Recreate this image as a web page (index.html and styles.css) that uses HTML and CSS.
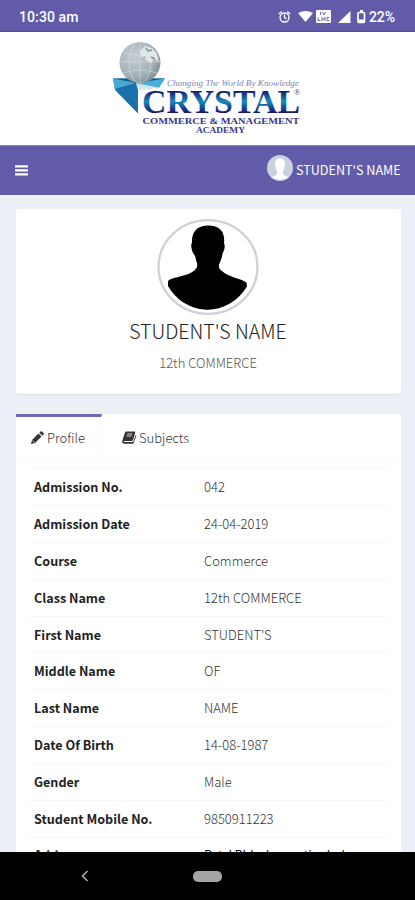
FILE: index.html
```html
<!DOCTYPE html>
<html lang="en">
<head>
<meta charset="utf-8">
<meta name="viewport" content="width=device-width">
<title>Student Profile</title>
<link rel="stylesheet" href="styles.css">
</head>
<body>
<div class="screen">
  <header class="status">
    <span class="clock">10:30 am</span>
    <svg class="status-icons" width="90" height="18" viewBox="0 0 90 18" fill="#fff">
      <g fill="none" stroke="#fff" stroke-width="1.3"><circle cx="7.5" cy="9.5" r="4.5"/><path d="M7.5 6.5v3l2 1.500M1.800 6l3-2.600M13.200 6l-3-2.600"/></g>
      <path d="M21 5q7.500-4 15 0l-7.500 9z"/>
      <rect x="39" y="2" width="15" height="13" rx="1"/>
      <path d="M43.500 4v3M45.500 4l1.500 3 1.500-3M41 9.500v3h2.500M45 9v4M48 9v4M45 11h3M52.500 9.500H50v3h2.500" fill="none" stroke="#615baa" stroke-width=".9"/>
      <path d="M61 15 73.500 3v12z"/>
      <rect x="81" y="4.500" width="6.500" height="10" rx="1" fill="none" stroke="#fff" stroke-width="1.700"/><path d="M83 2h3v2h-3zM82 11.500h5v3h-5z"/>
    </svg>
    <span class="battery">22%</span>
  </header>

  <div class="brand">
    <svg width="205" height="110" viewBox="0 0 205 110">
      <defs>
        <linearGradient id="word" x1="0" y1="0" x2="0" y2="1"><stop offset=".2" stop-color="#171b72"/><stop offset=".48" stop-color="#168abc"/><stop offset=".8" stop-color="#17156c"/></linearGradient>
        <radialGradient id="globe" cx=".38" cy=".35" r=".7"><stop stop-color="#c5ced2"/><stop offset=".7" stop-color="#a4b0b6"/><stop offset="1" stop-color="#7b8b93"/></radialGradient>
      </defs>
      <path d="M8 44.500h52l-6 9-21 2v24L10 56z" fill="#2482b7"/>
      <path d="M8 44.500h52L33 50z" fill="#155d91"/>
      <path d="M8 44.500 31 49 10 55z" fill="#4ba8d2"/>
      <path d="M10 55l21-6 2 4v26z" fill="#1b70ad"/>
      <path d="M33 49l27-4.500-6 9z" fill="#46b0db"/>
      <path d="M31 49l23 4.500-21 3z" fill="#d3e7f0"/>
      <circle cx="35" cy="28.500" r="20.500" fill="url(#globe)"/>
      <g fill="none" stroke="#dce4e7" stroke-width=".8" opacity=".7"><path d="M35 8v41M15 28h41M18 18q17 6 34 0M18 39q17-6 34 0"/><ellipse cx="35" cy="28.500" rx="11" ry="20.500"/></g>
      <path d="M35 17l5-5 7 2 5 6 2 8-5-3-3 4-5-3-1-4-4 1z" fill="#e0e7e8"/>
      <path d="M41 14l2 3 4-1M46 23l4 2" fill="none" stroke="#829298" stroke-width="1.500"/>
      <text class="motto" x="62" y="52" textLength="132" lengthAdjust="spacingAndGlyphs">Changing The World By Knowledge</text>
      <text class="wordmark" x="37" y="79" textLength="158" lengthAdjust="spacingAndGlyphs" fill="url(#word)">CRYSTAL</text>
      <text class="registered" x="189" y="61">®</text>
      <text class="subbrand" x="37.500" y="89.500" textLength="157" lengthAdjust="spacingAndGlyphs">COMMERCE &amp; MANAGEMENT</text>
      <text class="subbrand" x="91" y="99" textLength="49" lengthAdjust="spacingAndGlyphs">ACADEMY</text>
    </svg>
  </div>

  <nav class="navbar">
    <svg width="13" height="12" viewBox="0 0 13 12" fill="#fff"><rect width="13" height="2.400" y=".2" rx=".4"/><rect width="13" height="2.400" y="4.200" rx=".4"/><rect width="13" height="2.400" y="8.200" rx=".4"/></svg>
    <div class="user">
      <svg width="26" height="26" viewBox="0 0 26 26"><circle cx="13" cy="13" r="13" fill="#c9d1df"/><path d="M13 3.500c3.500 0 5.300 2.300 5 6.500-.2 3-1 4.500-2 6v3c1 1.500 3.500 1.500 5 3A13 13 0 0 1 5 22c1.500-1.500 4-1.500 5-3v-3c-1-1.500-1.800-3-2-6-.3-4.200 1.500-6.500 5-6.500z" fill="#fff"/></svg>
      <span>STUDENT'S NAME</span>
    </div>
  </nav>

  <main class="content">
    <section class="card person">
      <svg width="102" height="98" viewBox="0 0 102 98">
        <ellipse cx="51" cy="49" rx="49.500" ry="46.800" fill="#fff" stroke="#ced1d9" stroke-width="2.300"/>
        <path d="M50 7.500C39 8 34.500 15 35 25c-1.500 1-.5 7 1 10 1.500 2 2.500 3 3 7 1 3 1.500 4 1 7-3 6-10 7.500-17 9.500-5 1.500-9 1.500-12 4.500v5C19 82 32 90 47 91.500c16 1.500 33-6.500 43-23l-.5-4c-8-5-17-5-24-11-3-2.500-4-3-3.500-7 2-4 3-7 3.500-11 2-3 3-8 1.500-10 1-9-2-15-9-17-2-1-5-1-8-1z"/>
      </svg>
      <h1>STUDENT'S NAME</h1>
      <p>12th COMMERCE</p>
    </section>

    <section class="card details">
      <div class="tabs">
        <div class="tab active"><svg width="13" height="13" viewBox="0 0 13 13" fill="#333"><path d="M0 13l1-4 6.500-6.500 3 3L4 12zM8.300 1.700 9.500.5q.7-.7 1.500 0L12.500 2q.7.700 0 1.500l-1.200 1.200z"/><path d="M1.500 9.500l2 2" stroke="#fff" stroke-width=".7"/></svg><span>Profile</span></div>
        <div class="tab"><svg width="14" height="13" viewBox="0 0 14 13"><path d="M4 .5h8.500q1 .2.700 1.200L11 9q-.4 1-1.400 1H2.300q-.8.200-.6 1h8.500q1 0 1.400-1L13.500 4q.7.600.4 1.500l-2 6q-.4 1.300-1.700 1.300H2Q-.2 12.200.2 10L2.800 2Q3.200.7 4 .5z" fill="#333"/><path d="M5.200 3h5M4.600 5h5" stroke="#fff" stroke-width=".8"/></svg><span>Subjects</span></div>
      </div>
      <dl class="rows">
        <div class="row"><dt>Admission No.</dt><dd>042</dd></div>
        <div class="row"><dt>Admission Date</dt><dd>24-04-2019</dd></div>
        <div class="row"><dt>Course</dt><dd>Commerce</dd></div>
        <div class="row"><dt>Class Name</dt><dd>12th COMMERCE</dd></div>
        <div class="row"><dt>First Name</dt><dd>STUDENT'S</dd></div>
        <div class="row"><dt>Middle Name</dt><dd>OF</dd></div>
        <div class="row"><dt>Last Name</dt><dd>NAME</dd></div>
        <div class="row"><dt>Date Of Birth</dt><dd>14-08-1987</dd></div>
        <div class="row"><dt>Gender</dt><dd>Male</dd></div>
        <div class="row"><dt>Student Mobile No.</dt><dd>9850911223</dd></div>
        <div class="row address"><dt>Address</dt><dd>Patel Bldg, Innovative hub</dd></div>
      </dl>
    </section>
  </main>

  <footer class="system">
    <svg class="back" width="8" height="12" viewBox="0 0 8 12"><path d="M6.500 1 1.500 6l5 5" fill="none" stroke="#b0b0b0" stroke-width="1.500"/></svg>
    <span class="home"></span>
  </footer>
</div>
</body>
</html>
```
FILE: styles.css
```css
* { box-sizing: border-box; }
body { margin: 0; font-family: "Noto Sans CJK SC", "Open Sans", sans-serif; }
svg { display: block; flex: none; }
.screen { height: 900px; width: 415px; display: flex; flex-direction: column; overflow: hidden; background: #ecf0f6; }
.status { flex: none; height: 32px; background: #615baa; border-bottom: 1px solid #554c9d; color: #fff; display: flex; align-items: center; padding: 2px 19px 0 19px; font: 500 14px/18px Roboto, sans-serif; }
.clock { letter-spacing: .1px; }
.status-icons { margin-left: auto; }
.battery { width: 27px; margin-left: 2px; letter-spacing: -.1px; }
.brand { flex: none; height: 113px; padding: 2px 0 0 105px; background: #fff; }
.motto { font: italic 9px "Liberation Serif", serif; fill: #8383b4; }
.wordmark { font: bold 33px "Liberation Serif", serif; }
.registered { font: 8px "Liberation Serif", serif; fill: #383789; }
.subbrand { font: bold 9px "Liberation Serif", serif; fill: #3b3788; }
.navbar { flex: none; height: 50px; background: #615baa; border-top: 1px solid #8984bd; color: #fff; display: flex; align-items: center; justify-content: space-between; padding: 0 14px 0 15px; }
.user { display: flex; align-items: center; gap: 3px; font-size: 12.600px; line-height: 20px; margin-top: -6px; }
.user span { padding-top: 4px; width: 105px; white-space: nowrap; }
.content { flex: 1; min-height: 0; overflow: hidden; padding: 14px 14px 0 16px; }
.card { background: #fff; border-radius: 3px; box-shadow: 0 1px 1px #d9dfe5; }
.person { height: 185px; display: flex; flex-direction: column; align-items: center; padding: 9px 1px 0 0; }
.person h1 { margin: 1px 0 0; font-size: 19.500px; line-height: 28px; font-weight: 300; color: #222; }
.person p { margin: 8px 0 0; font-size: 13px; line-height: 20px; font-weight: 300; color: #555; }
.details { margin-top: 20px; height: 500px; }
.tabs { display: flex; height: 46px; border-bottom: 1px solid #fafafa; }
.tab { display: flex; align-items: center; gap: 3px; padding: 0 16px 2px 20px; border-top: 3px solid transparent; font-size: 13px; font-weight: 300; color: #333; }
.tab.active { width: 86px; padding-left: 15px; border-top-color: #7068b0; border-right: 1px solid #f8f8f8; }
.rows { margin: 8px 12px 0; }
.row { display: grid; grid-template-columns: 170px 1fr; height: 36.900px; align-items: center; padding: 0 0 0 6px; border-top: 1px solid #f8f8f8; font-size: 12.600px; line-height: 18px; }
.row dt { font-weight: 700; color: #222; }
.row dd { margin: 0; font-size: 13px; font-weight: 300; color: #333; }
.row.address { padding-bottom: 1px; }
.row.address dd { font-size: 12.600px; font-weight: 400; letter-spacing: -.3px; color: #111; }
.system { flex: none; height: 48px; background: #000; display: flex; align-items: center; padding-left: 81px; }
.home { width: 29px; height: 11px; border-radius: 5px; background: #a4a4a4; margin-left: 104px; }
```
